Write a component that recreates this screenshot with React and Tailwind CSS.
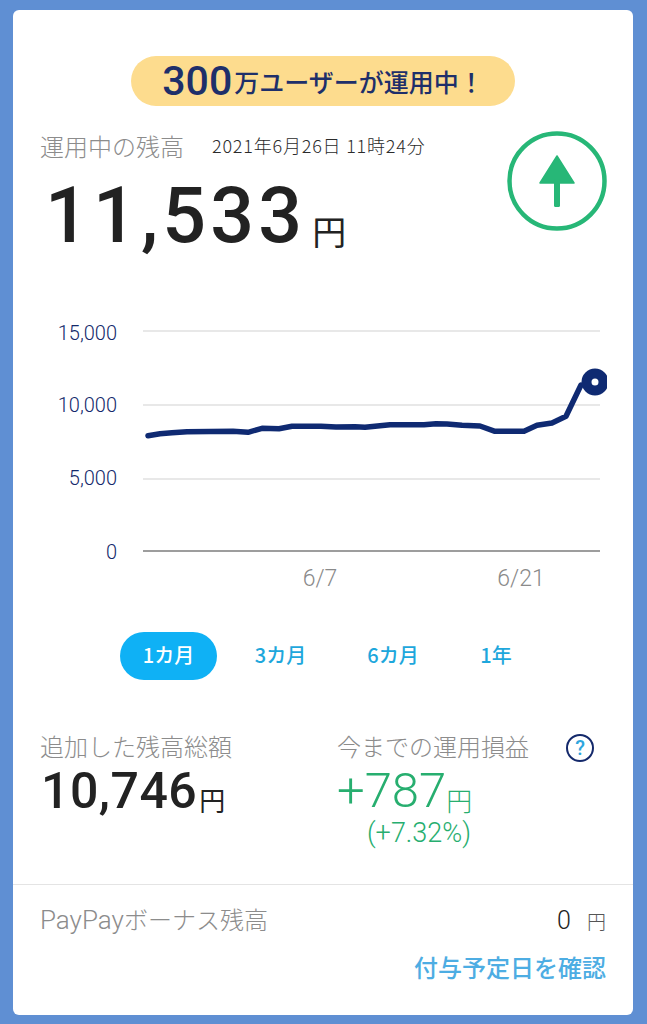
const jp = { fontFamily: '"Noto Sans CJK JP", sans-serif' };
const num = { fontFamily: 'Roboto, "Noto Sans CJK JP", sans-serif' };

const points = "148,434.7 160,432.7 172,431.7 187,430.7 233,430.3 248,431.3 262,427.3 279,427.7 292,425.3 321,425.3 336,426 355,425.7 365,426.3 390,423.7 424,423.7 436,422.7 447,423 462,424.3 480,425 495,430.3 524,430.3 537,424.3 552,422 566,415.3 581,384";
const CHART_TOP = 300;

function Chart() {
  const y = (v) => v - CHART_TOP;
  const x = (v) => v - 13;
  const shifted = points
    .split(" ")
    .map((p) => {
      const [a, b] = p.split(",").map(Number);
      return `${x(a)},${y(b)}`;
    })
    .join(" ");
  return (
    <svg width="620" height="300" viewBox="0 0 620 300" className="block" style={num}>
      <defs>
        <clipPath id="dotclip">
          <rect x="0" y="0" width="594" height="300" />
        </clipPath>
      </defs>
      {[330, 404, 478].map((v) => (
        <line key={v} x1={x(143)} x2={x(600)} y1={y(v)} y2={y(v)} stroke="#e8e8e8" strokeWidth="2" />
      ))}
      <line x1={x(143)} x2={x(600)} y1={y(550)} y2={y(550)} stroke="#7d7d7d" strokeWidth="1.5" />
      {[
        ["15,000", 339],
        ["10,000", 411],
        ["5,000", 484],
        ["0", 558],
      ].map(([t, v]) => (
        <text key={t} x={x(117)} y={y(v)} textAnchor="end" fontSize="20" fontWeight="300" fill="#14296b">
          {t}
        </text>
      ))}
      <text x={x(320)} y={y(585)} textAnchor="middle" fontSize="23" fontWeight="300" fill="#8a8a8a">6/7</text>
      <text x={x(521)} y={y(585)} textAnchor="middle" fontSize="23" fontWeight="300" fill="#8a8a8a">6/21</text>
      <polyline points={shifted} fill="none" stroke="#0f2a72" strokeWidth="5.5" strokeLinejoin="round" strokeLinecap="round" />
      <g clipPath="url(#dotclip)">
        <circle cx={x(595)} cy={y(381)} r="8.5" fill="#ffffff" stroke="#0f2a72" strokeWidth="10" />
      </g>
    </svg>
  );
}

function Arrow() {
  return (
    <svg width="100" height="100" viewBox="0 0 100 100" className="block">
      <circle cx="50" cy="50" r="47.5" fill="none" stroke="#27b777" strokeWidth="4.5" />
      <path d="M50 25 L67 52 H33 Z" fill="#27b777" stroke="#27b777" strokeWidth="1.5" strokeLinejoin="round" />
      <rect x="47" y="48" width="6" height="28" rx="1.5" fill="#27b777" />
    </svg>
  );
}

function Help() {
  return (
    <div className="mt-[5px] flex h-[28px] w-[28px] items-center justify-center rounded-full border-2 border-[#14296b] text-[20px] font-medium leading-none text-[#2ea6de]" style={num}>
      ?
    </div>
  );
}

export default function App() {
  return (
    <div className="h-[1024px] w-[647px] bg-[#5f8fd3] pb-[9px] pl-[13px] pr-[14px] pt-[10px]" style={jp}>
      <div className="flex h-full flex-col overflow-hidden rounded-[6px] bg-white">
        <div className="mt-[46px] flex h-[50px] w-[384px] items-center justify-center self-center rounded-full bg-[#fddc8e] text-[#1e2f6a]">
          <span className="text-[41px] font-medium leading-none" style={num}>300</span>
          <span className="ml-[2px] text-[25px] font-medium leading-none">万ユーザーが運用中！</span>
        </div>

        <div className="relative flex flex-col pl-[27px]">
          <div className="mt-[23px] flex h-[34px] items-center">
            <span className="text-[24px] font-light leading-none text-[#8c8c8c]">運用中の残高</span>
            <span className="ml-[28px] -translate-y-[1px] text-[18px] font-light leading-none tracking-[0.8px] text-[#2b2b2b]">2021年6月26日 11時24分</span>
          </div>
          <div className="mt-[14px] flex h-[78px] items-end pl-[5px] text-[#222222]">
            <span className="text-[77px] font-medium leading-none tracking-[4.2px]" style={num}>11,533</span>
            <span className="mb-[7px] ml-[6px] text-[34px] font-normal leading-none">円</span>
          </div>
          <div className="absolute right-[26px] top-[25px]">
            <Arrow />
          </div>
        </div>

        <div className="mt-[46px]">
          <Chart />
        </div>

        <div className="mt-[31px] flex h-[48px] items-center pl-[107px] text-[20px] font-medium text-[#1ea7dc]">
          <div className="flex h-[48px] w-[97px] items-center justify-center rounded-full bg-[#0fb1f5] pb-[2px] text-white">1カ月</div>
          <div className="w-[126px] pb-[2px] pl-[1px] text-center">3カ月</div>
          <div className="w-[100px] pb-[2px] text-center">6カ月</div>
          <div className="w-[106px] pb-[2px] text-center">1年</div>
        </div>

        <div className="mt-[49px] flex h-[155px] pl-[27px] pr-[26px]">
          <div className="w-[297px]">
            <div className="text-[24px] font-light leading-[34px] text-[#8c8c8c]">追加した残高総額</div>
            <div className="mt-[2px] flex items-end pl-[1px] text-[#222222]">
              <span className="text-[50px] font-medium leading-[52px] tracking-[0.5px]" style={num}>10,746</span>
              <span className="mb-[4px] ml-[2px] text-[26px] font-normal leading-none">円</span>
            </div>
          </div>
          <div className="flex-1">
            <div className="flex h-[34px] items-start justify-between pr-[13px]">
              <span className="text-[24px] font-light leading-[34px] text-[#8c8c8c]">今までの運用損益</span>
              <Help />
            </div>
            <div className="mt-[2px] flex items-end text-[#27ae6f]">
              <span className="text-[49px] font-light leading-[52px]" style={num}>+787</span>
              <span className="mb-[4px] text-[26px] font-light leading-none">円</span>
            </div>
            <div className="mt-[1px] pl-[30px] text-[27px] font-light leading-[30px] text-[#27ae6f]" style={num}>(+7.32%)</div>
          </div>
        </div>

        <div className="border-t border-[#e4e4e4] pl-[27px] pr-[27px] pt-[18px]">
          <div className="flex h-[34px] items-center justify-between">
            <span className="text-[24px] font-light leading-none text-[#8c8c8c]">
              <span className="text-[26px]" style={num}>PayPay</span>ボーナス残高
            </span>
            <span className="flex items-center font-light text-[#222222]">
              <span className="text-[25px] leading-none" style={num}>0</span>
              <span className="ml-[16px] text-[19px] leading-none text-[#555555]">円</span>
            </span>
          </div>
          <div className="mt-[13px] text-right text-[24px] font-medium leading-[34px] text-[#4dade3]">付与予定日を確認</div>
        </div>
      </div>
    </div>
  );
}
